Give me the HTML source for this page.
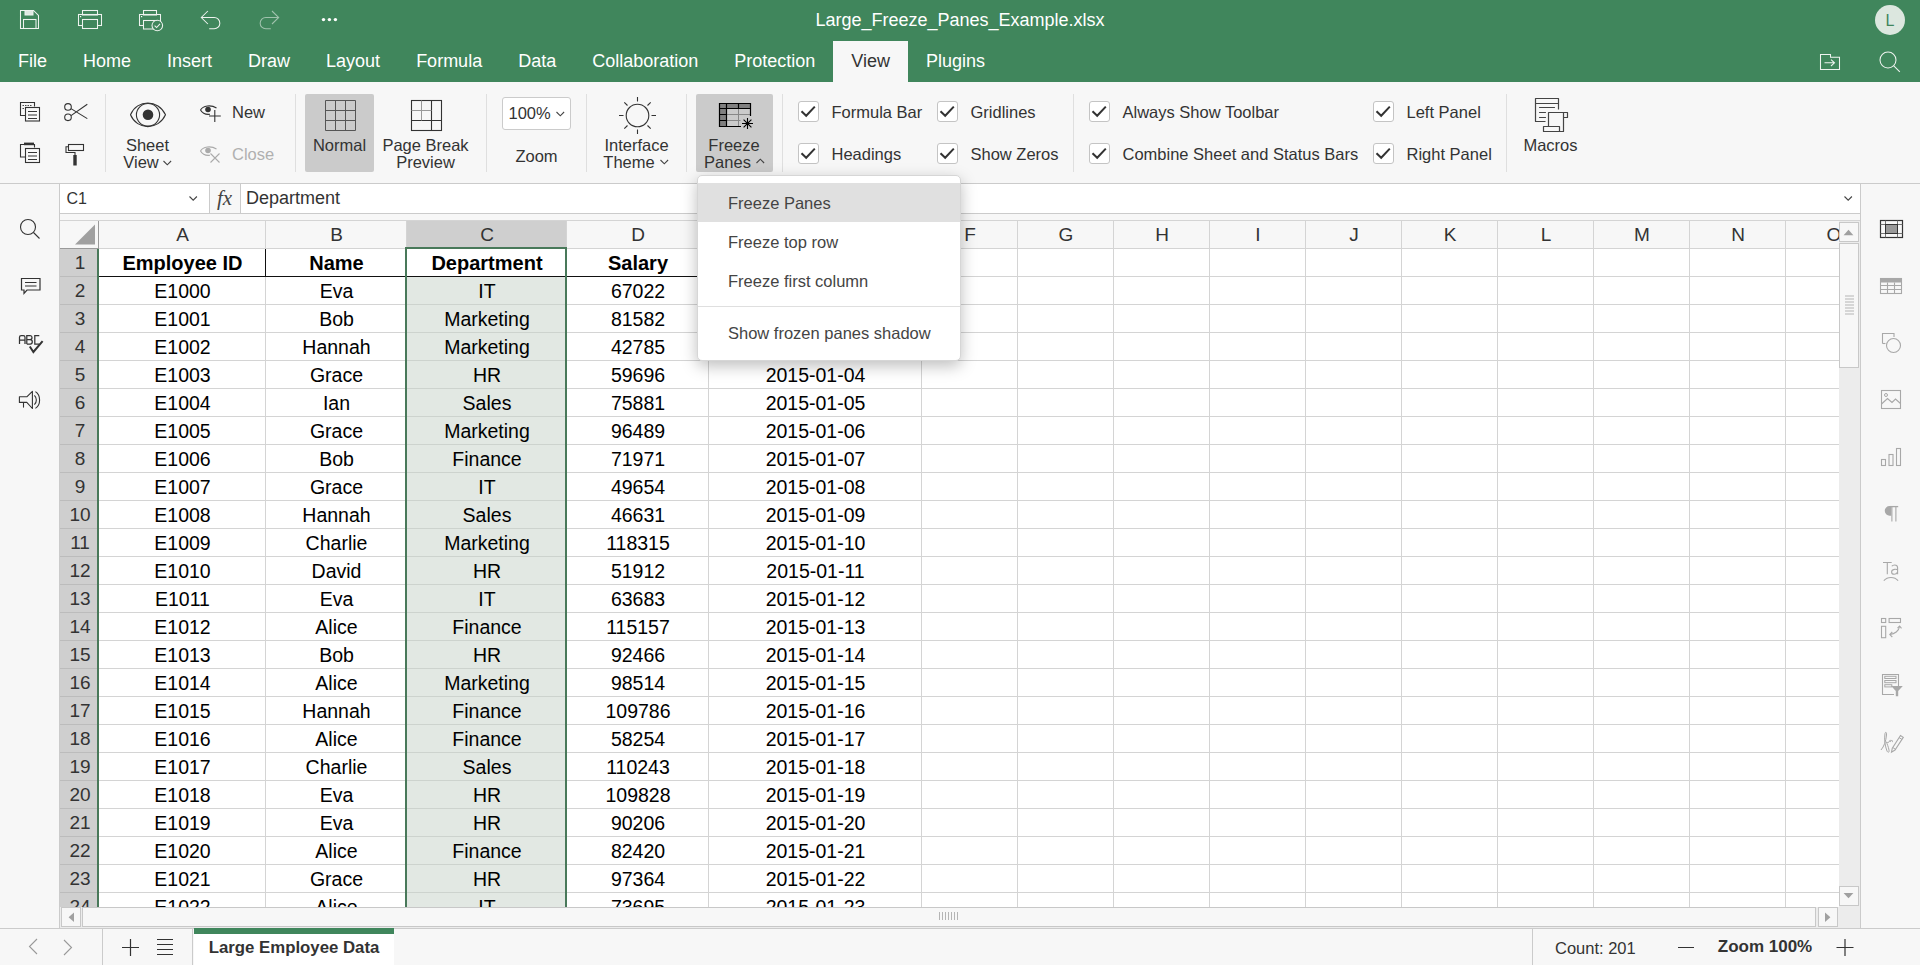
<!DOCTYPE html>
<html><head><meta charset="utf-8"><title>Large_Freeze_Panes_Example.xlsx</title>
<style>
html,body{margin:0;padding:0;width:1920px;height:965px;overflow:hidden;background:#f7f7f7;font-family:"Liberation Sans", sans-serif;}
.t{position:absolute;white-space:nowrap;font-family:"Liberation Sans", sans-serif;}
.tab{height:41px;line-height:41px;padding:0 18px;font-size:18px;color:#fff;box-sizing:border-box;padding-top:0;}
.tab.act{background:#f7f7f7;color:#333;}
svg{overflow:visible}
</style></head><body>
<div style="position:absolute;left:0px;top:0px;width:1920px;height:82px;background:#40865c"></div>
<svg style="position:absolute;left:19px;top:9px;" width="22" height="22" viewBox="0 0 22 22" fill="none"><path d="M1.5 1.5H14.5L19.5 6.5V19.5H1.5Z" stroke="#eef3ef" stroke-width="1.05"/>
<rect x="6" y="1.5" width="8" height="4.5" fill="#dfe9e2" stroke="#eef3ef" stroke-width="1"/>
<rect x="4.5" y="10.5" width="12.5" height="9" stroke="#eef3ef" stroke-width="1.05"/></svg>
<svg style="position:absolute;left:77px;top:9px;" width="26" height="22" viewBox="0 0 26 22" fill="none"><rect x="5.5" y="1.5" width="15" height="4.5" stroke="#eef3ef" stroke-width="1.05"/>
<rect x="1.5" y="5.5" width="23" height="11" stroke="#eef3ef" stroke-width="1.05"/>
<rect x="5.5" y="10.5" width="15" height="9" fill="#40865c" stroke="#eef3ef" stroke-width="1.05"/>
<rect x="3" y="7" width="1.2" height="1.2" fill="#fff"/></svg>
<svg style="position:absolute;left:138px;top:9px;" width="28" height="24" viewBox="0 0 28 24" fill="none"><rect x="5.5" y="1.5" width="13" height="4.5" stroke="#eef3ef" stroke-width="1.05"/>
<rect x="1.5" y="5.5" width="21" height="11" stroke="#eef3ef" stroke-width="1.05"/>
<rect x="5.5" y="11.5" width="13" height="8.5" fill="#40865c" stroke="#eef3ef" stroke-width="1.05"/>
<rect x="3" y="7" width="1.2" height="1.2" fill="#fff"/>
<circle cx="19.3" cy="16.5" r="5.3" fill="#40865c" stroke="#eef3ef" stroke-width="1.05"/>
<path d="M16.6 16.6L18.6 18.6L22 14.8" stroke="#eef3ef" stroke-width="1.05"/></svg>
<svg style="position:absolute;left:199px;top:9px;" width="20" height="22" viewBox="0 0 20 22" fill="none"><path d="M8.9 2L2.3 8.5L8.9 15" stroke="#eef3ef" stroke-width="1.05"/>
<path d="M2.3 8.5H15.2A5.1 5.1 0 0 1 15.2 19.75H10.2" stroke="#eef3ef" stroke-width="1.05"/></svg>
<svg style="position:absolute;left:262px;top:9px;opacity:0.55" width="20" height="22" viewBox="0 0 20 22" fill="none"><path d="M10 2L16.7 8.5L10 15" stroke="#eef3ef" stroke-width="1.05"/>
<path d="M16.7 8.5H3.8A5.1 5.1 0 0 0 3.8 19.75H8.8" stroke="#eef3ef" stroke-width="1.05"/></svg>
<svg style="position:absolute;left:319px;top:16px;" width="20" height="8" viewBox="0 0 20 8" fill="none"><circle cx="4.5" cy="3.6" r="1.7" fill="#fff"/><circle cx="10.4" cy="3.6" r="1.7" fill="#fff"/><circle cx="16.4" cy="3.6" r="1.7" fill="#fff"/></svg>
<div class="t" style="left:660.0px;width:600px;text-align:center;top:10px;font-size:18px;line-height:20px;color:#fff;font-weight:normal;">Large_Freeze_Panes_Example.xlsx</div>
<div style="position:absolute;left:1875px;top:5px;width:30px;height:30px;background:#dce7df;border-radius:50%"></div>
<div class="t" style="left:1875.0px;width:30px;text-align:center;top:10.5px;font-size:16px;line-height:20px;color:#40865c;font-weight:normal;">L</div>
<div style="position:absolute;left:0;top:41px;height:41px;display:flex">
<div class="tab">File</div>
<div class="tab">Home</div>
<div class="tab">Insert</div>
<div class="tab">Draw</div>
<div class="tab">Layout</div>
<div class="tab">Formula</div>
<div class="tab">Data</div>
<div class="tab">Collaboration</div>
<div class="tab">Protection</div>
<div class="tab act">View</div>
<div class="tab">Plugins</div>
</div>
<svg style="position:absolute;left:1819px;top:53px;" width="22" height="19" viewBox="0 0 22 19" fill="none"><path d="M1.5 1.5H11.5V4.3H20.5V16.5H1.5Z" stroke="#eef3ef" stroke-width="1.05"/>
<path d="M5.5 9.8H15.5M12 6.6L15.5 9.8L12 13" stroke="#eef3ef" stroke-width="1.05"/></svg>
<svg style="position:absolute;left:1878px;top:50px;" width="24" height="24" viewBox="0 0 24 24" fill="none"><circle cx="10" cy="10" r="8" stroke="#eef3ef" stroke-width="1.05"/><path d="M15.8 15.8L21.8 21.8" stroke="#eef3ef" stroke-width="1.05"/></svg>
<div style="position:absolute;left:0px;top:82px;width:1920px;height:101px;background:#f7f7f7"></div>
<div style="position:absolute;left:0px;top:183px;width:1920px;height:1px;background:#cbcbcb"></div>
<div style="position:absolute;left:105px;top:94px;width:1px;height:78px;background:#dfdfdf"></div>
<div style="position:absolute;left:295px;top:94px;width:1px;height:78px;background:#dfdfdf"></div>
<div style="position:absolute;left:486px;top:94px;width:1px;height:78px;background:#dfdfdf"></div>
<div style="position:absolute;left:586px;top:94px;width:1px;height:78px;background:#dfdfdf"></div>
<div style="position:absolute;left:686px;top:94px;width:1px;height:78px;background:#dfdfdf"></div>
<div style="position:absolute;left:782px;top:94px;width:1px;height:78px;background:#dfdfdf"></div>
<div style="position:absolute;left:1073px;top:94px;width:1px;height:78px;background:#dfdfdf"></div>
<div style="position:absolute;left:1506px;top:94px;width:1px;height:78px;background:#dfdfdf"></div>
<svg style="position:absolute;left:19px;top:101px;" width="24" height="22" viewBox="0 0 24 22" fill="none"><path d="M6 14.5H1.5V1.5H15.5V5.5" stroke="#333" stroke-width="1.1"/>
<path d="M3.5 4.5H13.5M3.5 7.5H6" stroke="#333" stroke-width="0.9" stroke-dasharray="1.5 1"/>
<rect x="6.5" y="6.5" width="14" height="13.5" stroke="#333" stroke-width="1.1"/>
<path d="M9 10.5H18M9 14H18M9 17.5H18" stroke="#333" stroke-width="1.1"/></svg>
<svg style="position:absolute;left:63px;top:102px;" width="26" height="20" viewBox="0 0 26 20" fill="none"><circle cx="5" cy="4.9" r="3.3" stroke="#333" stroke-width="1.1"/>
<circle cx="5" cy="15.3" r="3.3" stroke="#333" stroke-width="1.1"/>
<path d="M8 6.6L24.3 16.6M8 13.6L24.3 2.3" stroke="#333" stroke-width="1.1"/></svg>
<svg style="position:absolute;left:19px;top:142px;" width="24" height="23" viewBox="0 0 24 23" fill="none"><path d="M6 15H1.5V2.5H15.5V5.5" stroke="#333" stroke-width="1.1"/>
<rect x="5" y="0.6" width="10" height="2.6" fill="#333"/>
<rect x="6.5" y="6.5" width="14" height="14" stroke="#333" stroke-width="1.1"/>
<path d="M9 10.5H18M9 14H18M9 17.5H18" stroke="#333" stroke-width="1.1"/></svg>
<svg style="position:absolute;left:65px;top:143px;" width="22" height="24" viewBox="0 0 22 24" fill="none"><rect x="3.5" y="1.5" width="15" height="6" stroke="#333" stroke-width="1.1"/>
<path d="M3.5 3.8H1V9.5H10V12" stroke="#333" stroke-width="1.1"/>
<rect x="8.3" y="12" width="3.4" height="10.5" fill="#333"/></svg>
<svg style="position:absolute;left:129px;top:101px;" width="40" height="28" viewBox="0 0 40 28" fill="none"><path d="M1.5 13.8C8 -2 29.5 -2 36.5 13.8C29.5 29.5 8 29.5 1.5 13.8Z" stroke="#333" stroke-width="1.1"/>
<ellipse cx="19" cy="13.8" rx="11.6" ry="11.3" stroke="#333" stroke-width="1.1"/>
<circle cx="19" cy="13.8" r="5.3" fill="#333"/></svg>
<div class="t" style="left:107.5px;width:80px;text-align:center;top:135px;font-size:16.5px;line-height:20px;color:#333;font-weight:normal;">Sheet</div>
<div class="t" style="left:101.0px;width:80px;text-align:center;top:152px;font-size:16.5px;line-height:20px;color:#333;font-weight:normal;">View</div>
<svg style="position:absolute;left:162px;top:159px;" width="11" height="8" viewBox="0 0 11 8" fill="none"><path d="M1.5 2L5.3 5.8L9.1 2" stroke="#444" stroke-width="1.1"/></svg>
<svg style="position:absolute;left:199px;top:104px;" width="24" height="20" viewBox="0 0 24 20" fill="none"><path d="M1.5 6C4 1.5 12 0.5 17.5 4" stroke="#333" stroke-width="1.1"/>
<path d="M1.5 6C3.5 9.5 7 10.8 11 10.3" stroke="#333" stroke-width="1.1"/>
<circle cx="9" cy="5.5" r="2.8" fill="#333"/>
<path d="M15.8 6V18M10 12H21.8" stroke="#333" stroke-width="1.1"/></svg>
<div class="t" style="left:232px;top:102px;font-size:16.5px;line-height:20px;color:#333;font-weight:normal;">New</div>
<svg style="position:absolute;left:199px;top:145px;" width="24" height="20" viewBox="0 0 24 20" fill="none"><path d="M1.5 6C4 1.5 12 0.5 17.5 4" stroke="#aaa" stroke-width="1.1"/>
<path d="M1.5 6C3.5 9.5 7 10.8 11 10.3" stroke="#aaa" stroke-width="1.1"/>
<circle cx="9" cy="5.5" r="2.8" fill="#aaa"/>
<path d="M11.5 8.5L20.5 17.5M20.5 8.5L11.5 17.5" stroke="#aaa" stroke-width="1.1"/></svg>
<div class="t" style="left:232px;top:144px;font-size:16.5px;line-height:20px;color:#b0b0b0;font-weight:normal;">Close</div>
<div style="position:absolute;left:305px;top:94px;width:69px;height:78px;background:#cbcbcb;border-radius:2px"></div>
<svg style="position:absolute;left:325px;top:100px;" width="32" height="32" viewBox="0 0 32 32" fill="none"><path d="M0.5 0.5V30.5M0.5 0.5H30.5" stroke="#555" stroke-width="1"/><path d="M10.5 0.5V30.5M0.5 10.5H30.5" stroke="#555" stroke-width="1"/><path d="M20.5 0.5V30.5M0.5 20.5H30.5" stroke="#555" stroke-width="1"/><path d="M30.5 0.5V30.5M0.5 30.5H30.5" stroke="#555" stroke-width="1"/></svg>
<div class="t" style="left:299.5px;width:80px;text-align:center;top:135px;font-size:16.5px;line-height:20px;color:#333;font-weight:normal;">Normal</div>
<svg style="position:absolute;left:411px;top:100px;" width="32" height="32" viewBox="0 0 32 32" fill="none"><rect x="0.5" y="0.5" width="30" height="30" stroke="#333" stroke-width="1.1"/>
<path d="M20.5 0.5V30.5M0.5 20.5H30.5" stroke="#333" stroke-width="1.1"/>
<path d="M10.5 0.5V20.5M0.5 10.5H20.5" stroke="#999" stroke-width="1"/></svg>
<div class="t" style="left:365.5px;width:120px;text-align:center;top:135px;font-size:16.5px;line-height:20px;color:#333;font-weight:normal;">Page Break</div>
<div class="t" style="left:365.5px;width:120px;text-align:center;top:152px;font-size:16.5px;line-height:20px;color:#333;font-weight:normal;">Preview</div>
<div style="position:absolute;left:502px;top:97px;width:69px;height:33px;background:#fff;border:1px solid #cbcbcb;border-radius:3px;box-sizing:border-box"></div>
<div class="t" style="left:508.5px;top:103px;font-size:16.5px;line-height:20px;color:#333;font-weight:normal;">100%</div>
<svg style="position:absolute;left:555px;top:110px;" width="11" height="8" viewBox="0 0 11 8" fill="none"><path d="M1.5 2L5.3 5.8L9.1 2" stroke="#444" stroke-width="1.1"/></svg>
<div class="t" style="left:496.5px;width:80px;text-align:center;top:146px;font-size:16.5px;line-height:20px;color:#333;font-weight:normal;">Zoom</div>
<svg style="position:absolute;left:617px;top:95px;" width="42" height="42" viewBox="0 0 42 42" fill="none"><circle cx="20.5" cy="20.5" r="11.3" stroke="#333" stroke-width="1.1"/>
<path d="M20.5 2V6.5M20.5 34.5V39M2 20.5H6.5M34.5 20.5H39M7.3 7.3L10.5 10.5M30.5 30.5L33.7 33.7M33.7 7.3L30.5 10.5M7.3 33.7L10.5 30.5" stroke="#333" stroke-width="1.1"/></svg>
<div class="t" style="left:586.5px;width:100px;text-align:center;top:135px;font-size:16.5px;line-height:20px;color:#333;font-weight:normal;">Interface</div>
<div class="t" style="left:579.0px;width:100px;text-align:center;top:152px;font-size:16.5px;line-height:20px;color:#333;font-weight:normal;">Theme</div>
<svg style="position:absolute;left:659px;top:158px;" width="11" height="8" viewBox="0 0 11 8" fill="none"><path d="M1.5 2L5.3 5.8L9.1 2" stroke="#444" stroke-width="1.1"/></svg>
<div style="position:absolute;left:696px;top:94px;width:77px;height:78px;background:#cbcbcb;border-radius:2px"></div>
<svg style="position:absolute;left:714px;top:98px;" width="44" height="34" viewBox="0 0 44 34" fill="none"><rect x="5.5" y="5.5" width="31" height="5" fill="#808080"/>
<rect x="5.5" y="5.5" width="7" height="23" fill="#808080"/>
<path d="M12.5 16.5H36.5M12.5 22.5H26.5M24.5 10.5V28.5" stroke="#888" stroke-width="1"/>
<path d="M36.5 18V5.5H5.5V28.5H27M5.5 10.5H36.5M12.5 5.5V28.5M24.5 5.5V10.5M5.5 16.5H12.5M5.5 22.5H12.5" stroke="#000" stroke-width="1.2"/>
<path d="M33.5 20V31M28 25.5H39M29.6 21.6L37.4 29.4M37.4 21.6L29.6 29.4" stroke="#000" stroke-width="1.1"/>
<circle cx="33.5" cy="25.5" r="1.3" fill="#000"/></svg>
<div class="t" style="left:694.0px;width:80px;text-align:center;top:135px;font-size:16.5px;line-height:20px;color:#333;font-weight:normal;">Freeze</div>
<div class="t" style="left:687.5px;width:80px;text-align:center;top:152px;font-size:16.5px;line-height:20px;color:#333;font-weight:normal;">Panes</div>
<svg style="position:absolute;left:755px;top:157px;" width="11" height="8" viewBox="0 0 11 8" fill="none"><path d="M1.5 6L5.3 2.2L9.1 6" stroke="#444" stroke-width="1.1"/></svg>
<div style="position:absolute;left:798px;top:101px;width:21px;height:21px;box-sizing:border-box;border:1px solid #c4c4c4;border-radius:3px;background:#fff"></div>
<svg style="position:absolute;left:798px;top:101px;" width="21" height="21" viewBox="0 0 21 21" fill="none"><path d="M3.5 10.3L8.2 14.8L16.8 5.6" stroke="#333" stroke-width="2"/></svg>
<div style="position:absolute;left:798px;top:143px;width:21px;height:21px;box-sizing:border-box;border:1px solid #c4c4c4;border-radius:3px;background:#fff"></div>
<svg style="position:absolute;left:798px;top:143px;" width="21" height="21" viewBox="0 0 21 21" fill="none"><path d="M3.5 10.3L8.2 14.8L16.8 5.6" stroke="#333" stroke-width="2"/></svg>
<div class="t" style="left:831.5px;top:102px;font-size:16.5px;line-height:20px;color:#333;font-weight:normal;">Formula Bar</div>
<div class="t" style="left:831.5px;top:144px;font-size:16.5px;line-height:20px;color:#333;font-weight:normal;">Headings</div>
<div style="position:absolute;left:937px;top:101px;width:21px;height:21px;box-sizing:border-box;border:1px solid #c4c4c4;border-radius:3px;background:#fff"></div>
<svg style="position:absolute;left:937px;top:101px;" width="21" height="21" viewBox="0 0 21 21" fill="none"><path d="M3.5 10.3L8.2 14.8L16.8 5.6" stroke="#333" stroke-width="2"/></svg>
<div style="position:absolute;left:937px;top:143px;width:21px;height:21px;box-sizing:border-box;border:1px solid #c4c4c4;border-radius:3px;background:#fff"></div>
<svg style="position:absolute;left:937px;top:143px;" width="21" height="21" viewBox="0 0 21 21" fill="none"><path d="M3.5 10.3L8.2 14.8L16.8 5.6" stroke="#333" stroke-width="2"/></svg>
<div class="t" style="left:970.5px;top:102px;font-size:16.5px;line-height:20px;color:#333;font-weight:normal;">Gridlines</div>
<div class="t" style="left:970.5px;top:144px;font-size:16.5px;line-height:20px;color:#333;font-weight:normal;">Show Zeros</div>
<div style="position:absolute;left:1089px;top:101px;width:21px;height:21px;box-sizing:border-box;border:1px solid #c4c4c4;border-radius:3px;background:#fff"></div>
<svg style="position:absolute;left:1089px;top:101px;" width="21" height="21" viewBox="0 0 21 21" fill="none"><path d="M3.5 10.3L8.2 14.8L16.8 5.6" stroke="#333" stroke-width="2"/></svg>
<div style="position:absolute;left:1089px;top:143px;width:21px;height:21px;box-sizing:border-box;border:1px solid #c4c4c4;border-radius:3px;background:#fff"></div>
<svg style="position:absolute;left:1089px;top:143px;" width="21" height="21" viewBox="0 0 21 21" fill="none"><path d="M3.5 10.3L8.2 14.8L16.8 5.6" stroke="#333" stroke-width="2"/></svg>
<div class="t" style="left:1122.5px;top:102px;font-size:16.5px;line-height:20px;color:#333;font-weight:normal;">Always Show Toolbar</div>
<div class="t" style="left:1122.5px;top:144px;font-size:16.5px;line-height:20px;color:#333;font-weight:normal;">Combine Sheet and Status Bars</div>
<div style="position:absolute;left:1373px;top:101px;width:21px;height:21px;box-sizing:border-box;border:1px solid #c4c4c4;border-radius:3px;background:#fff"></div>
<svg style="position:absolute;left:1373px;top:101px;" width="21" height="21" viewBox="0 0 21 21" fill="none"><path d="M3.5 10.3L8.2 14.8L16.8 5.6" stroke="#333" stroke-width="2"/></svg>
<div style="position:absolute;left:1373px;top:143px;width:21px;height:21px;box-sizing:border-box;border:1px solid #c4c4c4;border-radius:3px;background:#fff"></div>
<svg style="position:absolute;left:1373px;top:143px;" width="21" height="21" viewBox="0 0 21 21" fill="none"><path d="M3.5 10.3L8.2 14.8L16.8 5.6" stroke="#333" stroke-width="2"/></svg>
<div class="t" style="left:1406.5px;top:102px;font-size:16.5px;line-height:20px;color:#333;font-weight:normal;">Left Panel</div>
<div class="t" style="left:1406.5px;top:144px;font-size:16.5px;line-height:20px;color:#333;font-weight:normal;">Right Panel</div>
<svg style="position:absolute;left:1528px;top:94px;" width="48" height="42" viewBox="0 0 48 42" fill="none"><path d="M17.5 27.5H7.5V4.5H30.5V15.5M7.5 9.5H30.5" stroke="#444" stroke-width="1.2" stroke-linejoin="round"/>
<path d="M11.5 13.5H26.5M11.5 18.5H17.5M11.5 23.5H17.5" stroke="#444" stroke-width="1.2" stroke-linecap="round"/>
<path d="M20.5 32.5V18.5H39.5V23.5H35.5V37.5H15.5V32.5H31.5V37.5M35.5 18.5V23.5" stroke="#444" stroke-width="1.2" stroke-linejoin="round"/></svg>
<div class="t" style="left:1500.5px;width:100px;text-align:center;top:135px;font-size:16.5px;line-height:20px;color:#333;font-weight:normal;">Macros</div>
<div style="position:absolute;left:0px;top:184px;width:59px;height:744px;background:#f7f7f7"></div>
<div style="position:absolute;left:59px;top:184px;width:1px;height:744px;background:#cbcbcb"></div>
<svg style="position:absolute;left:18px;top:217px;" width="24" height="24" viewBox="0 0 24 24" fill="none"><circle cx="10" cy="10" r="7.5" stroke="#333" stroke-width="1.1"/><path d="M15.5 15.5L21.5 21.5" stroke="#333" stroke-width="1.1"/></svg>
<svg style="position:absolute;left:19px;top:276px;" width="24" height="22" viewBox="0 0 24 22" fill="none"><path d="M2.5 2.5H21V14H8L5 17.5V14H2.5Z" stroke="#333" stroke-width="1.2"/>
<path d="M6 6.5H17.5M6 10H17.5" stroke="#333" stroke-width="1.2"/></svg>
<svg style="position:absolute;left:10px;top:325px;" width="40" height="30" viewBox="0 0 40 30" fill="none"><path d="M9.5 19V12.2C9.5 11 10.2 10.5 11.2 10.5H13.3C14.3 10.5 15 11 15 12.2V19M9.5 15H15" stroke="#333" stroke-width="1.25"/>
<path d="M16.8 19V10.5H20.2C21.4 10.5 22 11.2 22 12.4C22 13.7 21.4 14.5 20.2 14.5H16.8M20.2 14.5C21.6 14.5 22.3 15.3 22.3 16.7C22.3 18.2 21.6 19 20.2 19H16.8" stroke="#333" stroke-width="1.25"/>
<path d="M29.3 10.5H24.8V19H29.3" stroke="#333" stroke-width="1.25"/>
<path d="M19.8 21.5L23.4 27L32.6 16.2" stroke="#333" stroke-width="2"/></svg>
<svg style="position:absolute;left:10px;top:385px;" width="30" height="28" viewBox="0 0 30 28" fill="none"><path d="M9.4 11.8H16.8L22.4 6.4V23.5L16.8 17.4H9.4Z" stroke="#333" stroke-width="1.1" stroke-linejoin="round"/>
<path d="M13.5 17.4V22.6" stroke="#333" stroke-width="1.1"/>
<path d="M24.4 10.3C27 12.8 27 17.2 24.4 19.7M25.4 6.6C31 10 31 20 25.4 23.4" stroke="#333" stroke-width="1.1"/></svg>
<div style="position:absolute;left:60px;top:184px;width:1800px;height:29px;background:#fff"></div>
<div style="position:absolute;left:60px;top:213px;width:1800px;height:1px;background:#cbcbcb"></div>
<div style="position:absolute;left:209px;top:184px;width:1px;height:29px;background:#cbcbcb"></div>
<div style="position:absolute;left:210px;top:184px;width:30px;height:29px;background:#f7f7f7"></div>
<div style="position:absolute;left:240px;top:184px;width:1px;height:29px;background:#cbcbcb"></div>
<div class="t" style="left:66.5px;top:188.5px;font-size:16px;line-height:20px;color:#333;font-weight:normal;">C1</div>
<svg style="position:absolute;left:187px;top:194px;" width="12" height="10" viewBox="0 0 12 10" fill="none"><path d="M2.5 2.5L6.2 6.2L9.9 2.5" stroke="#444" stroke-width="1.1"/></svg>
<div class="t" style="left:217px;top:188px;font-family:'Liberation Serif',serif;font-style:italic;font-size:21px;line-height:20px;color:#444">fx</div>
<div class="t" style="left:246px;top:188px;font-size:18px;line-height:20px;color:#333;font-weight:normal;">Department</div>
<svg style="position:absolute;left:1841.5px;top:193.5px;" width="12" height="10" viewBox="0 0 12 10" fill="none"><path d="M2.5 2.5L6.2 6.2L9.9 2.5" stroke="#444" stroke-width="1.1"/></svg>
<div style="position:absolute;left:60px;top:214px;width:1800px;height:7px;background:#f7f7f7"></div>
<div style="position:absolute;left:60px;top:220px;width:1779px;height:687px;overflow:hidden;background:#fff">
<div style="position:absolute;left:0px;top:0px;width:1779px;height:28px;background:#f7f7f7"></div>
<div style="position:absolute;left:0px;top:0px;width:1779px;height:1px;background:#d4d4d4"></div>
<div style="position:absolute;left:346px;top:1px;width:160px;height:27px;background:#cfcfcf"></div>
<div style="position:absolute;left:346px;top:1px;width:1px;height:27px;background:#bdbdbd"></div>
<div style="position:absolute;left:506px;top:1px;width:1px;height:27px;background:#bdbdbd"></div>
<div style="position:absolute;left:0px;top:29px;width:38px;height:660px;background:#cfcfcf"></div>
<div style="position:absolute;left:38px;top:28px;width:1741px;height:1px;background:#d4d4d4"></div>
<div style="position:absolute;left:0px;top:28px;width:38px;height:1px;background:#9a9a9a"></div>
<div style="position:absolute;left:38px;top:56px;width:1741px;height:1px;background:#d4d4d4"></div>
<div style="position:absolute;left:0px;top:56px;width:38px;height:1px;background:#bcbcbc"></div>
<div style="position:absolute;left:38px;top:84px;width:1741px;height:1px;background:#d4d4d4"></div>
<div style="position:absolute;left:0px;top:84px;width:38px;height:1px;background:#bcbcbc"></div>
<div style="position:absolute;left:38px;top:112px;width:1741px;height:1px;background:#d4d4d4"></div>
<div style="position:absolute;left:0px;top:112px;width:38px;height:1px;background:#bcbcbc"></div>
<div style="position:absolute;left:38px;top:140px;width:1741px;height:1px;background:#d4d4d4"></div>
<div style="position:absolute;left:0px;top:140px;width:38px;height:1px;background:#bcbcbc"></div>
<div style="position:absolute;left:38px;top:168px;width:1741px;height:1px;background:#d4d4d4"></div>
<div style="position:absolute;left:0px;top:168px;width:38px;height:1px;background:#bcbcbc"></div>
<div style="position:absolute;left:38px;top:196px;width:1741px;height:1px;background:#d4d4d4"></div>
<div style="position:absolute;left:0px;top:196px;width:38px;height:1px;background:#bcbcbc"></div>
<div style="position:absolute;left:38px;top:224px;width:1741px;height:1px;background:#d4d4d4"></div>
<div style="position:absolute;left:0px;top:224px;width:38px;height:1px;background:#bcbcbc"></div>
<div style="position:absolute;left:38px;top:252px;width:1741px;height:1px;background:#d4d4d4"></div>
<div style="position:absolute;left:0px;top:252px;width:38px;height:1px;background:#bcbcbc"></div>
<div style="position:absolute;left:38px;top:280px;width:1741px;height:1px;background:#d4d4d4"></div>
<div style="position:absolute;left:0px;top:280px;width:38px;height:1px;background:#bcbcbc"></div>
<div style="position:absolute;left:38px;top:308px;width:1741px;height:1px;background:#d4d4d4"></div>
<div style="position:absolute;left:0px;top:308px;width:38px;height:1px;background:#bcbcbc"></div>
<div style="position:absolute;left:38px;top:336px;width:1741px;height:1px;background:#d4d4d4"></div>
<div style="position:absolute;left:0px;top:336px;width:38px;height:1px;background:#bcbcbc"></div>
<div style="position:absolute;left:38px;top:364px;width:1741px;height:1px;background:#d4d4d4"></div>
<div style="position:absolute;left:0px;top:364px;width:38px;height:1px;background:#bcbcbc"></div>
<div style="position:absolute;left:38px;top:392px;width:1741px;height:1px;background:#d4d4d4"></div>
<div style="position:absolute;left:0px;top:392px;width:38px;height:1px;background:#bcbcbc"></div>
<div style="position:absolute;left:38px;top:420px;width:1741px;height:1px;background:#d4d4d4"></div>
<div style="position:absolute;left:0px;top:420px;width:38px;height:1px;background:#bcbcbc"></div>
<div style="position:absolute;left:38px;top:448px;width:1741px;height:1px;background:#d4d4d4"></div>
<div style="position:absolute;left:0px;top:448px;width:38px;height:1px;background:#bcbcbc"></div>
<div style="position:absolute;left:38px;top:476px;width:1741px;height:1px;background:#d4d4d4"></div>
<div style="position:absolute;left:0px;top:476px;width:38px;height:1px;background:#bcbcbc"></div>
<div style="position:absolute;left:38px;top:504px;width:1741px;height:1px;background:#d4d4d4"></div>
<div style="position:absolute;left:0px;top:504px;width:38px;height:1px;background:#bcbcbc"></div>
<div style="position:absolute;left:38px;top:532px;width:1741px;height:1px;background:#d4d4d4"></div>
<div style="position:absolute;left:0px;top:532px;width:38px;height:1px;background:#bcbcbc"></div>
<div style="position:absolute;left:38px;top:560px;width:1741px;height:1px;background:#d4d4d4"></div>
<div style="position:absolute;left:0px;top:560px;width:38px;height:1px;background:#bcbcbc"></div>
<div style="position:absolute;left:38px;top:588px;width:1741px;height:1px;background:#d4d4d4"></div>
<div style="position:absolute;left:0px;top:588px;width:38px;height:1px;background:#bcbcbc"></div>
<div style="position:absolute;left:38px;top:616px;width:1741px;height:1px;background:#d4d4d4"></div>
<div style="position:absolute;left:0px;top:616px;width:38px;height:1px;background:#bcbcbc"></div>
<div style="position:absolute;left:38px;top:644px;width:1741px;height:1px;background:#d4d4d4"></div>
<div style="position:absolute;left:0px;top:644px;width:38px;height:1px;background:#bcbcbc"></div>
<div style="position:absolute;left:38px;top:672px;width:1741px;height:1px;background:#d4d4d4"></div>
<div style="position:absolute;left:0px;top:672px;width:38px;height:1px;background:#bcbcbc"></div>
<div style="position:absolute;left:38px;top:700px;width:1741px;height:1px;background:#d4d4d4"></div>
<div style="position:absolute;left:0px;top:700px;width:38px;height:1px;background:#bcbcbc"></div>
<div style="position:absolute;left:205px;top:1px;width:1px;height:686px;background:#d4d4d4"></div>
<div style="position:absolute;left:346px;top:1px;width:1px;height:686px;background:#d4d4d4"></div>
<div style="position:absolute;left:506px;top:1px;width:1px;height:686px;background:#d4d4d4"></div>
<div style="position:absolute;left:648px;top:1px;width:1px;height:686px;background:#d4d4d4"></div>
<div style="position:absolute;left:861px;top:1px;width:1px;height:686px;background:#d4d4d4"></div>
<div style="position:absolute;left:957px;top:1px;width:1px;height:686px;background:#d4d4d4"></div>
<div style="position:absolute;left:1053px;top:1px;width:1px;height:686px;background:#d4d4d4"></div>
<div style="position:absolute;left:1149px;top:1px;width:1px;height:686px;background:#d4d4d4"></div>
<div style="position:absolute;left:1245px;top:1px;width:1px;height:686px;background:#d4d4d4"></div>
<div style="position:absolute;left:1341px;top:1px;width:1px;height:686px;background:#d4d4d4"></div>
<div style="position:absolute;left:1437px;top:1px;width:1px;height:686px;background:#d4d4d4"></div>
<div style="position:absolute;left:1533px;top:1px;width:1px;height:686px;background:#d4d4d4"></div>
<div style="position:absolute;left:1629px;top:1px;width:1px;height:686px;background:#d4d4d4"></div>
<div style="position:absolute;left:1725px;top:1px;width:1px;height:686px;background:#d4d4d4"></div>
<div style="position:absolute;left:1821px;top:1px;width:1px;height:686px;background:#d4d4d4"></div>
<div style="position:absolute;left:347px;top:57px;width:158px;height:640px;background:#e2e8e3"></div>
<div style="position:absolute;left:347px;top:84px;width:158px;height:1px;background:#cdd3ce"></div>
<div style="position:absolute;left:347px;top:112px;width:158px;height:1px;background:#cdd3ce"></div>
<div style="position:absolute;left:347px;top:140px;width:158px;height:1px;background:#cdd3ce"></div>
<div style="position:absolute;left:347px;top:168px;width:158px;height:1px;background:#cdd3ce"></div>
<div style="position:absolute;left:347px;top:196px;width:158px;height:1px;background:#cdd3ce"></div>
<div style="position:absolute;left:347px;top:224px;width:158px;height:1px;background:#cdd3ce"></div>
<div style="position:absolute;left:347px;top:252px;width:158px;height:1px;background:#cdd3ce"></div>
<div style="position:absolute;left:347px;top:280px;width:158px;height:1px;background:#cdd3ce"></div>
<div style="position:absolute;left:347px;top:308px;width:158px;height:1px;background:#cdd3ce"></div>
<div style="position:absolute;left:347px;top:336px;width:158px;height:1px;background:#cdd3ce"></div>
<div style="position:absolute;left:347px;top:364px;width:158px;height:1px;background:#cdd3ce"></div>
<div style="position:absolute;left:347px;top:392px;width:158px;height:1px;background:#cdd3ce"></div>
<div style="position:absolute;left:347px;top:420px;width:158px;height:1px;background:#cdd3ce"></div>
<div style="position:absolute;left:347px;top:448px;width:158px;height:1px;background:#cdd3ce"></div>
<div style="position:absolute;left:347px;top:476px;width:158px;height:1px;background:#cdd3ce"></div>
<div style="position:absolute;left:347px;top:504px;width:158px;height:1px;background:#cdd3ce"></div>
<div style="position:absolute;left:347px;top:532px;width:158px;height:1px;background:#cdd3ce"></div>
<div style="position:absolute;left:347px;top:560px;width:158px;height:1px;background:#cdd3ce"></div>
<div style="position:absolute;left:347px;top:588px;width:158px;height:1px;background:#cdd3ce"></div>
<div style="position:absolute;left:347px;top:616px;width:158px;height:1px;background:#cdd3ce"></div>
<div style="position:absolute;left:347px;top:644px;width:158px;height:1px;background:#cdd3ce"></div>
<div style="position:absolute;left:347px;top:672px;width:158px;height:1px;background:#cdd3ce"></div>
<div style="position:absolute;left:347px;top:700px;width:158px;height:1px;background:#cdd3ce"></div>
<div style="position:absolute;left:38px;top:56px;width:823px;height:1px;background:#111"></div>
<div style="position:absolute;left:205px;top:29px;width:1px;height:28px;background:#111"></div>
<div style="position:absolute;left:345px;top:27px;width:2px;height:661px;background:#49795a"></div>
<div style="position:absolute;left:505px;top:27px;width:2px;height:661px;background:#49795a"></div>
<div style="position:absolute;left:345px;top:27px;width:162px;height:2px;background:#49795a"></div>
<div style="position:absolute;left:37px;top:29px;width:2px;height:660px;background:#49795a"></div>
<div style="position:absolute;left:38px;top:1px;width:1px;height:28px;background:#9a9a9a"></div>
<svg style="position:absolute;left:15px;top:4px" width="21" height="21" viewBox="0 0 21 21"><path d="M20 0.5V20.5H0Z" fill="#a0a0a0"/></svg>
<div class="t" style="left:22.5px;width:200px;text-align:center;top:5px;font-size:19px;line-height:20px;color:#333;font-weight:normal">A</div>
<div class="t" style="left:176.5px;width:200px;text-align:center;top:5px;font-size:19px;line-height:20px;color:#333;font-weight:normal">B</div>
<div class="t" style="left:327.0px;width:200px;text-align:center;top:5px;font-size:19px;line-height:20px;color:#333;font-weight:normal">C</div>
<div class="t" style="left:478.0px;width:200px;text-align:center;top:5px;font-size:19px;line-height:20px;color:#333;font-weight:normal">D</div>
<div class="t" style="left:655.5px;width:200px;text-align:center;top:5px;font-size:19px;line-height:20px;color:#333;font-weight:normal">E</div>
<div class="t" style="left:810.0px;width:200px;text-align:center;top:5px;font-size:19px;line-height:20px;color:#333;font-weight:normal">F</div>
<div class="t" style="left:906.0px;width:200px;text-align:center;top:5px;font-size:19px;line-height:20px;color:#333;font-weight:normal">G</div>
<div class="t" style="left:1002.0px;width:200px;text-align:center;top:5px;font-size:19px;line-height:20px;color:#333;font-weight:normal">H</div>
<div class="t" style="left:1098.0px;width:200px;text-align:center;top:5px;font-size:19px;line-height:20px;color:#333;font-weight:normal">I</div>
<div class="t" style="left:1194.0px;width:200px;text-align:center;top:5px;font-size:19px;line-height:20px;color:#333;font-weight:normal">J</div>
<div class="t" style="left:1290.0px;width:200px;text-align:center;top:5px;font-size:19px;line-height:20px;color:#333;font-weight:normal">K</div>
<div class="t" style="left:1386.0px;width:200px;text-align:center;top:5px;font-size:19px;line-height:20px;color:#333;font-weight:normal">L</div>
<div class="t" style="left:1482.0px;width:200px;text-align:center;top:5px;font-size:19px;line-height:20px;color:#333;font-weight:normal">M</div>
<div class="t" style="left:1578.0px;width:200px;text-align:center;top:5px;font-size:19px;line-height:20px;color:#333;font-weight:normal">N</div>
<div class="t" style="left:1674.0px;width:200px;text-align:center;top:5px;font-size:19px;line-height:20px;color:#333;font-weight:normal">O</div>
<div class="t" style="left:1.0px;width:38px;text-align:center;top:33px;font-size:19px;line-height:20px;color:#333;font-weight:normal">1</div>
<div class="t" style="left:1.0px;width:38px;text-align:center;top:61px;font-size:19px;line-height:20px;color:#333;font-weight:normal">2</div>
<div class="t" style="left:1.0px;width:38px;text-align:center;top:89px;font-size:19px;line-height:20px;color:#333;font-weight:normal">3</div>
<div class="t" style="left:1.0px;width:38px;text-align:center;top:117px;font-size:19px;line-height:20px;color:#333;font-weight:normal">4</div>
<div class="t" style="left:1.0px;width:38px;text-align:center;top:145px;font-size:19px;line-height:20px;color:#333;font-weight:normal">5</div>
<div class="t" style="left:1.0px;width:38px;text-align:center;top:173px;font-size:19px;line-height:20px;color:#333;font-weight:normal">6</div>
<div class="t" style="left:1.0px;width:38px;text-align:center;top:201px;font-size:19px;line-height:20px;color:#333;font-weight:normal">7</div>
<div class="t" style="left:1.0px;width:38px;text-align:center;top:229px;font-size:19px;line-height:20px;color:#333;font-weight:normal">8</div>
<div class="t" style="left:1.0px;width:38px;text-align:center;top:257px;font-size:19px;line-height:20px;color:#333;font-weight:normal">9</div>
<div class="t" style="left:1.0px;width:38px;text-align:center;top:285px;font-size:19px;line-height:20px;color:#333;font-weight:normal">10</div>
<div class="t" style="left:1.0px;width:38px;text-align:center;top:313px;font-size:19px;line-height:20px;color:#333;font-weight:normal">11</div>
<div class="t" style="left:1.0px;width:38px;text-align:center;top:341px;font-size:19px;line-height:20px;color:#333;font-weight:normal">12</div>
<div class="t" style="left:1.0px;width:38px;text-align:center;top:369px;font-size:19px;line-height:20px;color:#333;font-weight:normal">13</div>
<div class="t" style="left:1.0px;width:38px;text-align:center;top:397px;font-size:19px;line-height:20px;color:#333;font-weight:normal">14</div>
<div class="t" style="left:1.0px;width:38px;text-align:center;top:425px;font-size:19px;line-height:20px;color:#333;font-weight:normal">15</div>
<div class="t" style="left:1.0px;width:38px;text-align:center;top:453px;font-size:19px;line-height:20px;color:#333;font-weight:normal">16</div>
<div class="t" style="left:1.0px;width:38px;text-align:center;top:481px;font-size:19px;line-height:20px;color:#333;font-weight:normal">17</div>
<div class="t" style="left:1.0px;width:38px;text-align:center;top:509px;font-size:19px;line-height:20px;color:#333;font-weight:normal">18</div>
<div class="t" style="left:1.0px;width:38px;text-align:center;top:537px;font-size:19px;line-height:20px;color:#333;font-weight:normal">19</div>
<div class="t" style="left:1.0px;width:38px;text-align:center;top:565px;font-size:19px;line-height:20px;color:#333;font-weight:normal">20</div>
<div class="t" style="left:1.0px;width:38px;text-align:center;top:593px;font-size:19px;line-height:20px;color:#333;font-weight:normal">21</div>
<div class="t" style="left:1.0px;width:38px;text-align:center;top:621px;font-size:19px;line-height:20px;color:#333;font-weight:normal">22</div>
<div class="t" style="left:1.0px;width:38px;text-align:center;top:649px;font-size:19px;line-height:20px;color:#333;font-weight:normal">23</div>
<div class="t" style="left:1.0px;width:38px;text-align:center;top:677px;font-size:19px;line-height:20px;color:#333;font-weight:normal">24</div>
<div class="t" style="left:22.5px;width:200px;text-align:center;top:33px;font-size:20px;line-height:20px;color:#000;font-weight:bold">Employee ID</div>
<div class="t" style="left:176.5px;width:200px;text-align:center;top:33px;font-size:20px;line-height:20px;color:#000;font-weight:bold">Name</div>
<div class="t" style="left:327.0px;width:200px;text-align:center;top:33px;font-size:20px;line-height:20px;color:#000;font-weight:bold">Department</div>
<div class="t" style="left:478.0px;width:200px;text-align:center;top:33px;font-size:20px;line-height:20px;color:#000;font-weight:bold">Salary</div>
<div class="t" style="left:655.5px;width:200px;text-align:center;top:33px;font-size:20px;line-height:20px;color:#000;font-weight:bold">Join Date</div>
<div class="t" style="left:22.5px;width:200px;text-align:center;top:61px;font-size:19.5px;line-height:20px;color:#000;font-weight:normal">E1000</div>
<div class="t" style="left:176.5px;width:200px;text-align:center;top:61px;font-size:19.5px;line-height:20px;color:#000;font-weight:normal">Eva</div>
<div class="t" style="left:327.0px;width:200px;text-align:center;top:61px;font-size:19.5px;line-height:20px;color:#000;font-weight:normal">IT</div>
<div class="t" style="left:478.0px;width:200px;text-align:center;top:61px;font-size:19.5px;line-height:20px;color:#000;font-weight:normal">67022</div>
<div class="t" style="left:655.5px;width:200px;text-align:center;top:61px;font-size:19.5px;line-height:20px;color:#000;font-weight:normal">2015-01-01</div>
<div class="t" style="left:22.5px;width:200px;text-align:center;top:89px;font-size:19.5px;line-height:20px;color:#000;font-weight:normal">E1001</div>
<div class="t" style="left:176.5px;width:200px;text-align:center;top:89px;font-size:19.5px;line-height:20px;color:#000;font-weight:normal">Bob</div>
<div class="t" style="left:327.0px;width:200px;text-align:center;top:89px;font-size:19.5px;line-height:20px;color:#000;font-weight:normal">Marketing</div>
<div class="t" style="left:478.0px;width:200px;text-align:center;top:89px;font-size:19.5px;line-height:20px;color:#000;font-weight:normal">81582</div>
<div class="t" style="left:655.5px;width:200px;text-align:center;top:89px;font-size:19.5px;line-height:20px;color:#000;font-weight:normal">2015-01-02</div>
<div class="t" style="left:22.5px;width:200px;text-align:center;top:117px;font-size:19.5px;line-height:20px;color:#000;font-weight:normal">E1002</div>
<div class="t" style="left:176.5px;width:200px;text-align:center;top:117px;font-size:19.5px;line-height:20px;color:#000;font-weight:normal">Hannah</div>
<div class="t" style="left:327.0px;width:200px;text-align:center;top:117px;font-size:19.5px;line-height:20px;color:#000;font-weight:normal">Marketing</div>
<div class="t" style="left:478.0px;width:200px;text-align:center;top:117px;font-size:19.5px;line-height:20px;color:#000;font-weight:normal">42785</div>
<div class="t" style="left:655.5px;width:200px;text-align:center;top:117px;font-size:19.5px;line-height:20px;color:#000;font-weight:normal">2015-01-03</div>
<div class="t" style="left:22.5px;width:200px;text-align:center;top:145px;font-size:19.5px;line-height:20px;color:#000;font-weight:normal">E1003</div>
<div class="t" style="left:176.5px;width:200px;text-align:center;top:145px;font-size:19.5px;line-height:20px;color:#000;font-weight:normal">Grace</div>
<div class="t" style="left:327.0px;width:200px;text-align:center;top:145px;font-size:19.5px;line-height:20px;color:#000;font-weight:normal">HR</div>
<div class="t" style="left:478.0px;width:200px;text-align:center;top:145px;font-size:19.5px;line-height:20px;color:#000;font-weight:normal">59696</div>
<div class="t" style="left:655.5px;width:200px;text-align:center;top:145px;font-size:19.5px;line-height:20px;color:#000;font-weight:normal">2015-01-04</div>
<div class="t" style="left:22.5px;width:200px;text-align:center;top:173px;font-size:19.5px;line-height:20px;color:#000;font-weight:normal">E1004</div>
<div class="t" style="left:176.5px;width:200px;text-align:center;top:173px;font-size:19.5px;line-height:20px;color:#000;font-weight:normal">Ian</div>
<div class="t" style="left:327.0px;width:200px;text-align:center;top:173px;font-size:19.5px;line-height:20px;color:#000;font-weight:normal">Sales</div>
<div class="t" style="left:478.0px;width:200px;text-align:center;top:173px;font-size:19.5px;line-height:20px;color:#000;font-weight:normal">75881</div>
<div class="t" style="left:655.5px;width:200px;text-align:center;top:173px;font-size:19.5px;line-height:20px;color:#000;font-weight:normal">2015-01-05</div>
<div class="t" style="left:22.5px;width:200px;text-align:center;top:201px;font-size:19.5px;line-height:20px;color:#000;font-weight:normal">E1005</div>
<div class="t" style="left:176.5px;width:200px;text-align:center;top:201px;font-size:19.5px;line-height:20px;color:#000;font-weight:normal">Grace</div>
<div class="t" style="left:327.0px;width:200px;text-align:center;top:201px;font-size:19.5px;line-height:20px;color:#000;font-weight:normal">Marketing</div>
<div class="t" style="left:478.0px;width:200px;text-align:center;top:201px;font-size:19.5px;line-height:20px;color:#000;font-weight:normal">96489</div>
<div class="t" style="left:655.5px;width:200px;text-align:center;top:201px;font-size:19.5px;line-height:20px;color:#000;font-weight:normal">2015-01-06</div>
<div class="t" style="left:22.5px;width:200px;text-align:center;top:229px;font-size:19.5px;line-height:20px;color:#000;font-weight:normal">E1006</div>
<div class="t" style="left:176.5px;width:200px;text-align:center;top:229px;font-size:19.5px;line-height:20px;color:#000;font-weight:normal">Bob</div>
<div class="t" style="left:327.0px;width:200px;text-align:center;top:229px;font-size:19.5px;line-height:20px;color:#000;font-weight:normal">Finance</div>
<div class="t" style="left:478.0px;width:200px;text-align:center;top:229px;font-size:19.5px;line-height:20px;color:#000;font-weight:normal">71971</div>
<div class="t" style="left:655.5px;width:200px;text-align:center;top:229px;font-size:19.5px;line-height:20px;color:#000;font-weight:normal">2015-01-07</div>
<div class="t" style="left:22.5px;width:200px;text-align:center;top:257px;font-size:19.5px;line-height:20px;color:#000;font-weight:normal">E1007</div>
<div class="t" style="left:176.5px;width:200px;text-align:center;top:257px;font-size:19.5px;line-height:20px;color:#000;font-weight:normal">Grace</div>
<div class="t" style="left:327.0px;width:200px;text-align:center;top:257px;font-size:19.5px;line-height:20px;color:#000;font-weight:normal">IT</div>
<div class="t" style="left:478.0px;width:200px;text-align:center;top:257px;font-size:19.5px;line-height:20px;color:#000;font-weight:normal">49654</div>
<div class="t" style="left:655.5px;width:200px;text-align:center;top:257px;font-size:19.5px;line-height:20px;color:#000;font-weight:normal">2015-01-08</div>
<div class="t" style="left:22.5px;width:200px;text-align:center;top:285px;font-size:19.5px;line-height:20px;color:#000;font-weight:normal">E1008</div>
<div class="t" style="left:176.5px;width:200px;text-align:center;top:285px;font-size:19.5px;line-height:20px;color:#000;font-weight:normal">Hannah</div>
<div class="t" style="left:327.0px;width:200px;text-align:center;top:285px;font-size:19.5px;line-height:20px;color:#000;font-weight:normal">Sales</div>
<div class="t" style="left:478.0px;width:200px;text-align:center;top:285px;font-size:19.5px;line-height:20px;color:#000;font-weight:normal">46631</div>
<div class="t" style="left:655.5px;width:200px;text-align:center;top:285px;font-size:19.5px;line-height:20px;color:#000;font-weight:normal">2015-01-09</div>
<div class="t" style="left:22.5px;width:200px;text-align:center;top:313px;font-size:19.5px;line-height:20px;color:#000;font-weight:normal">E1009</div>
<div class="t" style="left:176.5px;width:200px;text-align:center;top:313px;font-size:19.5px;line-height:20px;color:#000;font-weight:normal">Charlie</div>
<div class="t" style="left:327.0px;width:200px;text-align:center;top:313px;font-size:19.5px;line-height:20px;color:#000;font-weight:normal">Marketing</div>
<div class="t" style="left:478.0px;width:200px;text-align:center;top:313px;font-size:19.5px;line-height:20px;color:#000;font-weight:normal">118315</div>
<div class="t" style="left:655.5px;width:200px;text-align:center;top:313px;font-size:19.5px;line-height:20px;color:#000;font-weight:normal">2015-01-10</div>
<div class="t" style="left:22.5px;width:200px;text-align:center;top:341px;font-size:19.5px;line-height:20px;color:#000;font-weight:normal">E1010</div>
<div class="t" style="left:176.5px;width:200px;text-align:center;top:341px;font-size:19.5px;line-height:20px;color:#000;font-weight:normal">David</div>
<div class="t" style="left:327.0px;width:200px;text-align:center;top:341px;font-size:19.5px;line-height:20px;color:#000;font-weight:normal">HR</div>
<div class="t" style="left:478.0px;width:200px;text-align:center;top:341px;font-size:19.5px;line-height:20px;color:#000;font-weight:normal">51912</div>
<div class="t" style="left:655.5px;width:200px;text-align:center;top:341px;font-size:19.5px;line-height:20px;color:#000;font-weight:normal">2015-01-11</div>
<div class="t" style="left:22.5px;width:200px;text-align:center;top:369px;font-size:19.5px;line-height:20px;color:#000;font-weight:normal">E1011</div>
<div class="t" style="left:176.5px;width:200px;text-align:center;top:369px;font-size:19.5px;line-height:20px;color:#000;font-weight:normal">Eva</div>
<div class="t" style="left:327.0px;width:200px;text-align:center;top:369px;font-size:19.5px;line-height:20px;color:#000;font-weight:normal">IT</div>
<div class="t" style="left:478.0px;width:200px;text-align:center;top:369px;font-size:19.5px;line-height:20px;color:#000;font-weight:normal">63683</div>
<div class="t" style="left:655.5px;width:200px;text-align:center;top:369px;font-size:19.5px;line-height:20px;color:#000;font-weight:normal">2015-01-12</div>
<div class="t" style="left:22.5px;width:200px;text-align:center;top:397px;font-size:19.5px;line-height:20px;color:#000;font-weight:normal">E1012</div>
<div class="t" style="left:176.5px;width:200px;text-align:center;top:397px;font-size:19.5px;line-height:20px;color:#000;font-weight:normal">Alice</div>
<div class="t" style="left:327.0px;width:200px;text-align:center;top:397px;font-size:19.5px;line-height:20px;color:#000;font-weight:normal">Finance</div>
<div class="t" style="left:478.0px;width:200px;text-align:center;top:397px;font-size:19.5px;line-height:20px;color:#000;font-weight:normal">115157</div>
<div class="t" style="left:655.5px;width:200px;text-align:center;top:397px;font-size:19.5px;line-height:20px;color:#000;font-weight:normal">2015-01-13</div>
<div class="t" style="left:22.5px;width:200px;text-align:center;top:425px;font-size:19.5px;line-height:20px;color:#000;font-weight:normal">E1013</div>
<div class="t" style="left:176.5px;width:200px;text-align:center;top:425px;font-size:19.5px;line-height:20px;color:#000;font-weight:normal">Bob</div>
<div class="t" style="left:327.0px;width:200px;text-align:center;top:425px;font-size:19.5px;line-height:20px;color:#000;font-weight:normal">HR</div>
<div class="t" style="left:478.0px;width:200px;text-align:center;top:425px;font-size:19.5px;line-height:20px;color:#000;font-weight:normal">92466</div>
<div class="t" style="left:655.5px;width:200px;text-align:center;top:425px;font-size:19.5px;line-height:20px;color:#000;font-weight:normal">2015-01-14</div>
<div class="t" style="left:22.5px;width:200px;text-align:center;top:453px;font-size:19.5px;line-height:20px;color:#000;font-weight:normal">E1014</div>
<div class="t" style="left:176.5px;width:200px;text-align:center;top:453px;font-size:19.5px;line-height:20px;color:#000;font-weight:normal">Alice</div>
<div class="t" style="left:327.0px;width:200px;text-align:center;top:453px;font-size:19.5px;line-height:20px;color:#000;font-weight:normal">Marketing</div>
<div class="t" style="left:478.0px;width:200px;text-align:center;top:453px;font-size:19.5px;line-height:20px;color:#000;font-weight:normal">98514</div>
<div class="t" style="left:655.5px;width:200px;text-align:center;top:453px;font-size:19.5px;line-height:20px;color:#000;font-weight:normal">2015-01-15</div>
<div class="t" style="left:22.5px;width:200px;text-align:center;top:481px;font-size:19.5px;line-height:20px;color:#000;font-weight:normal">E1015</div>
<div class="t" style="left:176.5px;width:200px;text-align:center;top:481px;font-size:19.5px;line-height:20px;color:#000;font-weight:normal">Hannah</div>
<div class="t" style="left:327.0px;width:200px;text-align:center;top:481px;font-size:19.5px;line-height:20px;color:#000;font-weight:normal">Finance</div>
<div class="t" style="left:478.0px;width:200px;text-align:center;top:481px;font-size:19.5px;line-height:20px;color:#000;font-weight:normal">109786</div>
<div class="t" style="left:655.5px;width:200px;text-align:center;top:481px;font-size:19.5px;line-height:20px;color:#000;font-weight:normal">2015-01-16</div>
<div class="t" style="left:22.5px;width:200px;text-align:center;top:509px;font-size:19.5px;line-height:20px;color:#000;font-weight:normal">E1016</div>
<div class="t" style="left:176.5px;width:200px;text-align:center;top:509px;font-size:19.5px;line-height:20px;color:#000;font-weight:normal">Alice</div>
<div class="t" style="left:327.0px;width:200px;text-align:center;top:509px;font-size:19.5px;line-height:20px;color:#000;font-weight:normal">Finance</div>
<div class="t" style="left:478.0px;width:200px;text-align:center;top:509px;font-size:19.5px;line-height:20px;color:#000;font-weight:normal">58254</div>
<div class="t" style="left:655.5px;width:200px;text-align:center;top:509px;font-size:19.5px;line-height:20px;color:#000;font-weight:normal">2015-01-17</div>
<div class="t" style="left:22.5px;width:200px;text-align:center;top:537px;font-size:19.5px;line-height:20px;color:#000;font-weight:normal">E1017</div>
<div class="t" style="left:176.5px;width:200px;text-align:center;top:537px;font-size:19.5px;line-height:20px;color:#000;font-weight:normal">Charlie</div>
<div class="t" style="left:327.0px;width:200px;text-align:center;top:537px;font-size:19.5px;line-height:20px;color:#000;font-weight:normal">Sales</div>
<div class="t" style="left:478.0px;width:200px;text-align:center;top:537px;font-size:19.5px;line-height:20px;color:#000;font-weight:normal">110243</div>
<div class="t" style="left:655.5px;width:200px;text-align:center;top:537px;font-size:19.5px;line-height:20px;color:#000;font-weight:normal">2015-01-18</div>
<div class="t" style="left:22.5px;width:200px;text-align:center;top:565px;font-size:19.5px;line-height:20px;color:#000;font-weight:normal">E1018</div>
<div class="t" style="left:176.5px;width:200px;text-align:center;top:565px;font-size:19.5px;line-height:20px;color:#000;font-weight:normal">Eva</div>
<div class="t" style="left:327.0px;width:200px;text-align:center;top:565px;font-size:19.5px;line-height:20px;color:#000;font-weight:normal">HR</div>
<div class="t" style="left:478.0px;width:200px;text-align:center;top:565px;font-size:19.5px;line-height:20px;color:#000;font-weight:normal">109828</div>
<div class="t" style="left:655.5px;width:200px;text-align:center;top:565px;font-size:19.5px;line-height:20px;color:#000;font-weight:normal">2015-01-19</div>
<div class="t" style="left:22.5px;width:200px;text-align:center;top:593px;font-size:19.5px;line-height:20px;color:#000;font-weight:normal">E1019</div>
<div class="t" style="left:176.5px;width:200px;text-align:center;top:593px;font-size:19.5px;line-height:20px;color:#000;font-weight:normal">Eva</div>
<div class="t" style="left:327.0px;width:200px;text-align:center;top:593px;font-size:19.5px;line-height:20px;color:#000;font-weight:normal">HR</div>
<div class="t" style="left:478.0px;width:200px;text-align:center;top:593px;font-size:19.5px;line-height:20px;color:#000;font-weight:normal">90206</div>
<div class="t" style="left:655.5px;width:200px;text-align:center;top:593px;font-size:19.5px;line-height:20px;color:#000;font-weight:normal">2015-01-20</div>
<div class="t" style="left:22.5px;width:200px;text-align:center;top:621px;font-size:19.5px;line-height:20px;color:#000;font-weight:normal">E1020</div>
<div class="t" style="left:176.5px;width:200px;text-align:center;top:621px;font-size:19.5px;line-height:20px;color:#000;font-weight:normal">Alice</div>
<div class="t" style="left:327.0px;width:200px;text-align:center;top:621px;font-size:19.5px;line-height:20px;color:#000;font-weight:normal">Finance</div>
<div class="t" style="left:478.0px;width:200px;text-align:center;top:621px;font-size:19.5px;line-height:20px;color:#000;font-weight:normal">82420</div>
<div class="t" style="left:655.5px;width:200px;text-align:center;top:621px;font-size:19.5px;line-height:20px;color:#000;font-weight:normal">2015-01-21</div>
<div class="t" style="left:22.5px;width:200px;text-align:center;top:649px;font-size:19.5px;line-height:20px;color:#000;font-weight:normal">E1021</div>
<div class="t" style="left:176.5px;width:200px;text-align:center;top:649px;font-size:19.5px;line-height:20px;color:#000;font-weight:normal">Grace</div>
<div class="t" style="left:327.0px;width:200px;text-align:center;top:649px;font-size:19.5px;line-height:20px;color:#000;font-weight:normal">HR</div>
<div class="t" style="left:478.0px;width:200px;text-align:center;top:649px;font-size:19.5px;line-height:20px;color:#000;font-weight:normal">97364</div>
<div class="t" style="left:655.5px;width:200px;text-align:center;top:649px;font-size:19.5px;line-height:20px;color:#000;font-weight:normal">2015-01-22</div>
<div class="t" style="left:22.5px;width:200px;text-align:center;top:677px;font-size:19.5px;line-height:20px;color:#000;font-weight:normal">E1022</div>
<div class="t" style="left:176.5px;width:200px;text-align:center;top:677px;font-size:19.5px;line-height:20px;color:#000;font-weight:normal">Alice</div>
<div class="t" style="left:327.0px;width:200px;text-align:center;top:677px;font-size:19.5px;line-height:20px;color:#000;font-weight:normal">IT</div>
<div class="t" style="left:478.0px;width:200px;text-align:center;top:677px;font-size:19.5px;line-height:20px;color:#000;font-weight:normal">73695</div>
<div class="t" style="left:655.5px;width:200px;text-align:center;top:677px;font-size:19.5px;line-height:20px;color:#000;font-weight:normal">2015-01-23</div>
</div>
<div style="position:absolute;left:1839px;top:221px;width:21px;height:707px;background:#ececec"></div>
<div style="position:absolute;left:1839px;top:220px;width:21px;height:1px;background:#d4d4d4"></div>
<div style="position:absolute;left:1839px;top:222px;width:20px;height:20px;background:#f7f7f7;border:1px solid #c8c8c8;box-sizing:border-box"></div>
<svg style="position:absolute;left:1839px;top:222px;" width="20" height="20" viewBox="0 0 20 20" fill="none"><path d="M4.6 13.2L9.5 7.8L14.4 13.2Z" fill="#a0a0a0"/></svg>
<div style="position:absolute;left:1839px;top:243px;width:20px;height:125px;background:#f7f7f7;border:1px solid #c8c8c8;box-sizing:border-box"></div>
<svg style="position:absolute;left:1845px;top:295px;" width="9" height="21" viewBox="0 0 9 21" fill="none"><path d="M0 1H9" stroke="#b5b5b5" stroke-width="1"/><path d="M0 4H9" stroke="#b5b5b5" stroke-width="1"/><path d="M0 7H9" stroke="#b5b5b5" stroke-width="1"/><path d="M0 10H9" stroke="#b5b5b5" stroke-width="1"/><path d="M0 13H9" stroke="#b5b5b5" stroke-width="1"/><path d="M0 16H9" stroke="#b5b5b5" stroke-width="1"/><path d="M0 19H9" stroke="#b5b5b5" stroke-width="1"/></svg>
<div style="position:absolute;left:1839px;top:886px;width:20px;height:20px;background:#f7f7f7;border:1px solid #c8c8c8;box-sizing:border-box"></div>
<svg style="position:absolute;left:1839px;top:886px;" width="20" height="20" viewBox="0 0 20 20" fill="none"><path d="M4.6 7L9.5 12.3L14.4 7Z" fill="#a0a0a0"/></svg>
<div style="position:absolute;left:60px;top:907px;width:1779px;height:21px;background:#ececec"></div>
<div style="position:absolute;left:61px;top:907px;width:20px;height:20px;background:#f7f7f7;border:1px solid #c8c8c8;box-sizing:border-box"></div>
<svg style="position:absolute;left:61px;top:907px;" width="20" height="20" viewBox="0 0 20 20" fill="none"><path d="M13 5.5L7.6 10.2L13 15Z" fill="#a0a0a0"/></svg>
<div style="position:absolute;left:82px;top:907px;width:1734px;height:20px;background:#f7f7f7;border:1px solid #c8c8c8;box-sizing:border-box"></div>
<svg style="position:absolute;left:938px;top:911px;" width="22" height="10" viewBox="0 0 22 10" fill="none"><path d="M1.5 1V9" stroke="#b5b5b5" stroke-width="1"/><path d="M4.5 1V9" stroke="#b5b5b5" stroke-width="1"/><path d="M7.5 1V9" stroke="#b5b5b5" stroke-width="1"/><path d="M10.5 1V9" stroke="#b5b5b5" stroke-width="1"/><path d="M13.5 1V9" stroke="#b5b5b5" stroke-width="1"/><path d="M16.5 1V9" stroke="#b5b5b5" stroke-width="1"/><path d="M19.5 1V9" stroke="#b5b5b5" stroke-width="1"/></svg>
<div style="position:absolute;left:1818px;top:907px;width:20px;height:20px;background:#f7f7f7;border:1px solid #c8c8c8;box-sizing:border-box"></div>
<svg style="position:absolute;left:1818px;top:907px;" width="20" height="20" viewBox="0 0 20 20" fill="none"><path d="M7 5.5L12.4 10.2L7 15Z" fill="#a0a0a0"/></svg>
<div style="position:absolute;left:1860px;top:184px;width:60px;height:744px;background:#f7f7f7"></div>
<div style="position:absolute;left:1860px;top:184px;width:1px;height:744px;background:#cbcbcb"></div>
<svg style="position:absolute;left:1879px;top:219px;" width="26" height="22" viewBox="0 0 26 22" fill="none"><rect x="1.5" y="1.5" width="22" height="17" stroke="#333" stroke-width="1.2"/>
<path d="M1.5 5.5H23.5M1.5 14.5H23.5M6.5 1.5V18.5M18.5 1.5V18.5" stroke="#666" stroke-width="0.9"/>
<rect x="6.5" y="5.5" width="12" height="9" fill="#999" stroke="#333" stroke-width="1"/></svg>
<svg style="position:absolute;left:1879px;top:277px;" width="26" height="20" viewBox="0 0 26 20" fill="none"><rect x="1.5" y="1.5" width="21" height="4" fill="#a8a8a8"/>
<rect x="1.5" y="1.5" width="21" height="15" stroke="#a8a8a8" stroke-width="1.1"/>
<path d="M1.5 8.5H22.5M1.5 12.5H22.5M8.5 5.5V16.5M15.5 5.5V16.5" stroke="#a8a8a8" stroke-width="1.1"/></svg>
<svg style="position:absolute;left:1879px;top:331px;" width="26" height="24" viewBox="0 0 26 24" fill="none"><path d="M3.5 12.5V2.5H15V6" stroke="#a8a8a8" stroke-width="1.1"/>
<path d="M3.5 12.5H6.5" stroke="#a8a8a8" stroke-width="1.1"/>
<circle cx="14.5" cy="14.5" r="7" stroke="#a8a8a8" stroke-width="1.1"/></svg>
<svg style="position:absolute;left:1879px;top:388px;" width="26" height="24" viewBox="0 0 26 24" fill="none"><rect x="2.5" y="2.5" width="19" height="18" stroke="#a8a8a8" stroke-width="1.1"/>
<circle cx="7" cy="7" r="1.5" stroke="#a8a8a8" stroke-width="1"/>
<path d="M2.5 16L8.5 10.5L13 14.5L16.5 11L21.5 15.5" stroke="#a8a8a8" stroke-width="1.1"/></svg>
<svg style="position:absolute;left:1879px;top:446px;" width="26" height="22" viewBox="0 0 26 22" fill="none"><rect x="2.5" y="13.5" width="4" height="6" stroke="#a8a8a8" stroke-width="1.1"/>
<rect x="10" y="8.5" width="4" height="11" stroke="#a8a8a8" stroke-width="1.1"/>
<rect x="17.5" y="2.5" width="4" height="17" stroke="#a8a8a8" stroke-width="1.1"/></svg>
<svg style="position:absolute;left:1880px;top:500px;" width="20" height="26" viewBox="0 0 20 26" fill="none"><path d="M11.4 6H9.6A4.85 4.85 0 0 0 9.6 15.7H11.4Z" fill="#a8a8a8"/>
<path d="M9.5 6.6H18.2" stroke="#a8a8a8" stroke-width="1.3"/>
<path d="M11.9 6V21.6M15.9 6V21.6" stroke="#a8a8a8" stroke-width="1.1"/></svg>
<svg style="position:absolute;left:1880px;top:558px;" width="22" height="26" viewBox="0 0 22 26" fill="none"><path d="M3 4.5H11.7M7.3 4.5V16.3" stroke="#a8a8a8" stroke-width="1.1"/>
<path d="M11.8 8.3C12.5 7.2 13.5 7 14.6 7C16.3 7 17.6 7.8 17.6 9.8V16.3" stroke="#a8a8a8" stroke-width="1.1"/>
<path d="M17.6 11.6C16.5 11.3 15.3 11.2 14.3 11.4C12.5 11.7 11.6 12.6 11.6 13.9C11.6 15.3 12.7 16.2 14.2 16.2C15.8 16.2 17 15.2 17.6 14" stroke="#a8a8a8" stroke-width="1.1"/>
<path d="M3.8 22.7C7.5 18.5 14.5 18.5 18.1 22.7" stroke="#a8a8a8" stroke-width="1.1"/></svg>
<svg style="position:absolute;left:1878px;top:615px;" width="26" height="26" viewBox="0 0 26 26" fill="none"><rect x="3.5" y="3.5" width="4.2" height="4" stroke="#a8a8a8" stroke-width="1.1"/>
<rect x="3.5" y="11.3" width="4.2" height="11.4" stroke="#a8a8a8" stroke-width="1.1"/>
<rect x="11.1" y="3.5" width="11.4" height="4" stroke="#a8a8a8" stroke-width="1.1"/>
<path d="M12 19.5C16.5 19 21 16 21.5 11.5" stroke="#a8a8a8" stroke-width="1.1"/>
<path d="M19.5 13.2L21.6 11L23.5 13.4M14.3 17L11.8 19.6L14.3 22" stroke="#a8a8a8" stroke-width="1.1"/></svg>
<svg style="position:absolute;left:1878px;top:670px;" width="28" height="30" viewBox="0 0 28 30" fill="none"><path d="M16 24.5H4.5V4.5H20.5V16" stroke="#a8a8a8" stroke-width="1.1"/>
<rect x="6.8" y="6.3" width="11.2" height="2.2" stroke="#a8a8a8" stroke-width="1"/>
<rect x="6.8" y="10.5" width="11.2" height="2.2" stroke="#a8a8a8" stroke-width="1"/>
<rect x="6.8" y="14.7" width="7" height="2.2" stroke="#a8a8a8" stroke-width="1"/>
<path d="M13.2 16H24.8L20.2 21V26.3H17.8V21Z" fill="#a8a8a8"/></svg>
<svg style="position:absolute;left:1878px;top:729px;" width="28" height="26" viewBox="0 0 28 26" fill="none"><path d="M3 21C6 17.5 8 12 8.5 6C8.8 3 7.5 2.5 7 4.5C6 10 7 17 9 22C10 24 11.5 23.5 11 21C10.5 18 9 15 8.5 13C10 14 11 13.5 11.5 12M11.5 12C12 11.3 12.5 10.3 12.3 12.5C12.2 13.5 13.5 11 14 11.2C14.5 11.5 14.2 13 15 13" stroke="#a8a8a8" stroke-width="1"/>
<path d="M13.5 23.2L14.3 19.2L22.5 6.5L25.3 8.3L17 21Z" stroke="#a8a8a8" stroke-width="1.1"/>
<path d="M15 18.7L17.8 20.5M21 8.5L24 10.5" stroke="#a8a8a8" stroke-width="1"/></svg>
<div style="position:absolute;left:0px;top:928px;width:1920px;height:37px;background:#f7f7f7"></div>
<div style="position:absolute;left:0px;top:928px;width:1920px;height:1px;background:#cbcbcb"></div>
<div style="position:absolute;left:102px;top:929px;width:1px;height:36px;background:#cbcbcb"></div>
<div style="position:absolute;left:192px;top:929px;width:1px;height:36px;background:#cbcbcb"></div>
<div style="position:absolute;left:1532px;top:929px;width:1px;height:36px;background:#cbcbcb"></div>
<svg style="position:absolute;left:26px;top:937px;" width="14" height="20" viewBox="0 0 14 20" fill="none"><path d="M11 2L3.5 9.5L11 17" stroke="#999" stroke-width="1.1"/></svg>
<svg style="position:absolute;left:61px;top:937.5px;" width="14" height="20" viewBox="0 0 14 20" fill="none"><path d="M3 2L10.5 9.5L3 17" stroke="#999" stroke-width="1.1"/></svg>
<svg style="position:absolute;left:121px;top:938px;" width="20" height="20" viewBox="0 0 20 20" fill="none"><path d="M9.5 1V18M1 9.5H18" stroke="#333" stroke-width="1.2"/></svg>
<svg style="position:absolute;left:155px;top:938px;" width="20" height="20" viewBox="0 0 20 20" fill="none"><path d="M2 1.5H18M2 6.5H18M2 11.5H18M2 16.5H18" stroke="#333" stroke-width="1.1"/></svg>
<div style="position:absolute;left:194px;top:928px;width:200px;height:37px;background:#fff"></div>
<div style="position:absolute;left:194px;top:928px;width:200px;height:6px;background:#40865c"></div>
<div class="t" style="left:194.0px;width:200px;text-align:center;top:938px;font-size:16.8px;line-height:20px;color:#333;font-weight:bold;">Large Employee Data</div>
<div class="t" style="left:1555px;top:938px;font-size:16.5px;line-height:20px;color:#333;font-weight:normal;">Count: 201</div>
<div style="position:absolute;left:1678px;top:947px;width:16px;height:1.2px;background:#333"></div>
<div class="t" style="left:1705.0px;width:120px;text-align:center;top:937px;font-size:17px;line-height:20px;color:#333;font-weight:bold;">Zoom 100%</div>
<svg style="position:absolute;left:1836px;top:938px;" width="20" height="20" viewBox="0 0 20 20" fill="none"><path d="M9 1V18M0.5 9.5H17.5" stroke="#333" stroke-width="1.2"/></svg>
<div style="position:absolute;left:697px;top:175px;width:264px;height:186px;background:#fff;border:1px solid #d6d6d6;border-radius:5px;box-sizing:border-box;box-shadow:0 5px 16px rgba(0,0,0,0.26)"></div>
<div style="position:absolute;left:698px;top:183px;width:262px;height:39px;background:#e0e0e0"></div>
<div style="position:absolute;left:698px;top:306px;width:262px;height:1px;background:#dfdfdf"></div>
<div class="t" style="left:728px;top:193px;font-size:16.5px;line-height:20px;color:#444;font-weight:normal;">Freeze Panes</div>
<div class="t" style="left:728px;top:232px;font-size:16.5px;line-height:20px;color:#444;font-weight:normal;">Freeze top row</div>
<div class="t" style="left:728px;top:271px;font-size:16.5px;line-height:20px;color:#444;font-weight:normal;">Freeze first column</div>
<div class="t" style="left:728px;top:323px;font-size:16.5px;line-height:20px;color:#444;font-weight:normal;">Show frozen panes shadow</div>
</body></html>
